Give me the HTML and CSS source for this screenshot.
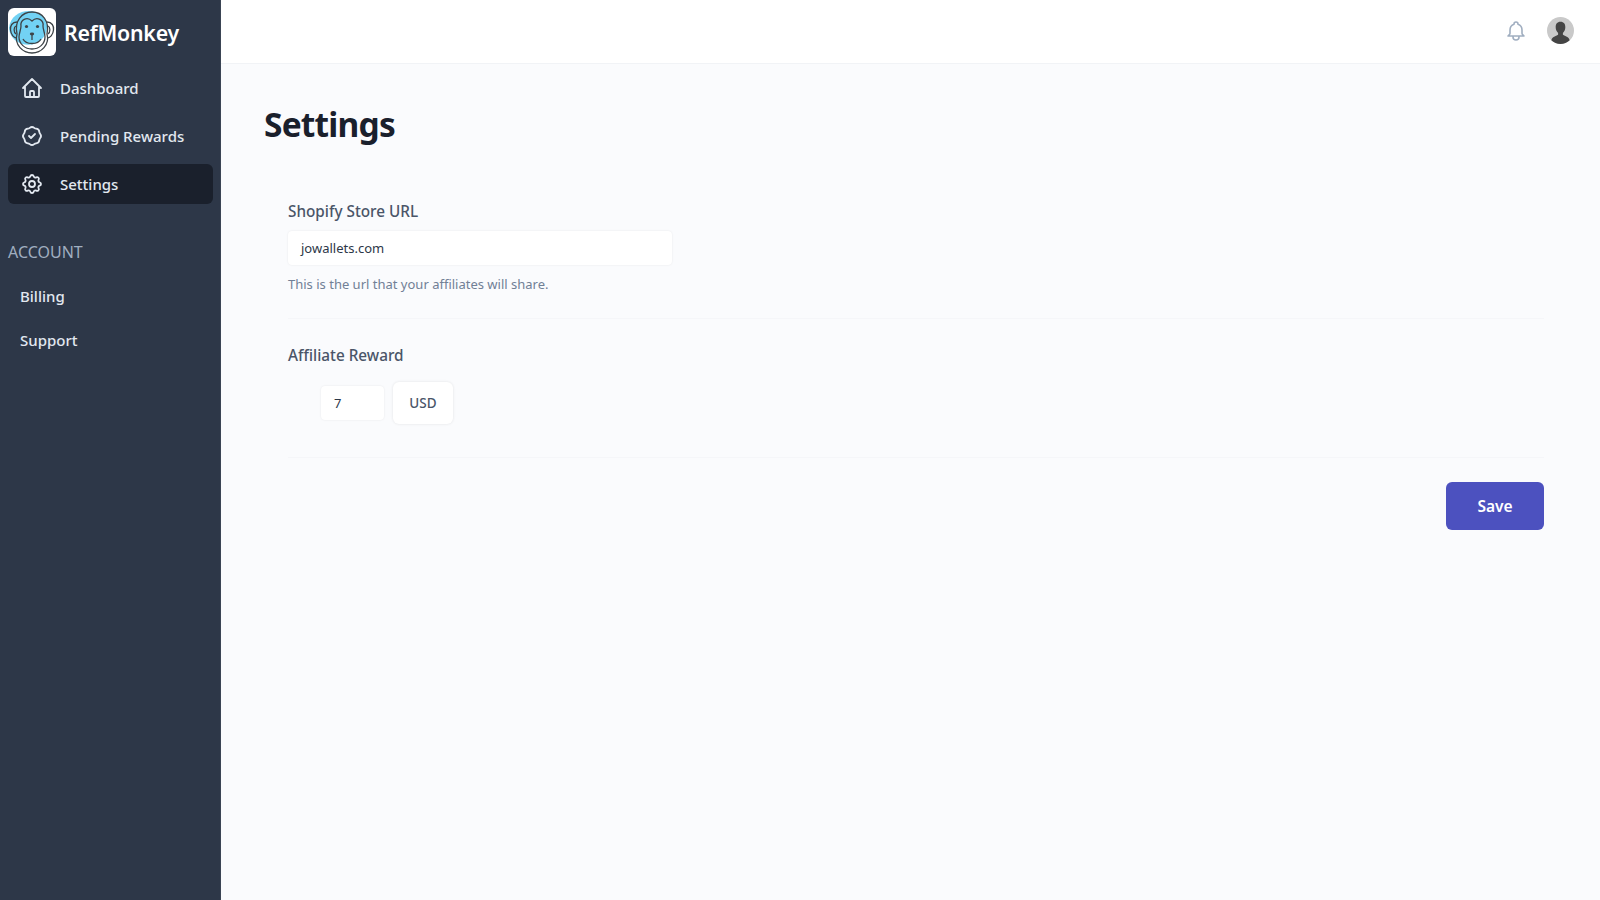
FILE: index.html
```html
<!DOCTYPE html>
<html lang="en">
<head>
  <meta charset="UTF-8">
  <meta name="viewport" content="width=device-width, initial-scale=1.0">
  <title>RefMonkey - Settings</title>
  <link rel="stylesheet" href="styles.css">
</head>
<body>

  <div class="app">
    <aside class="sidebar">
      <div class="brand">
        <div class="logo">
          <svg viewBox="0 0 48 48" width="48" height="48">
            <path d="M1 20 C2 9 11 3 21 3 C31 3 38 9 39 17 C40 26 33 34 26 36 C15 39 2 33 1 20 Z" fill="#72d2f4"/>
            <g fill="none" stroke="#3d4347" stroke-width="1.300">
              <path d="M9 14 C4 14 2 18 2.500 22 C3 27 6 30 9 30"/>
              <path d="M8 18 C5.500 19 5.500 24 8 26"/>
              <path d="M39 14 C44 14 46 18 45.500 22 C45 27 42 30 39 30"/>
              <path d="M40 18 C42.500 19 42.500 24 40 26"/>
              <path d="M9 26 C6 13 14 4 24 4 C34 4 42 13 39 26 C42 37 33 45 24 45 C15 45 6 37 9 26 Z"/>
              <path d="M24 13 C19 8 12 12 13 18 C13 22 11 25 11 29 C11 36 17 41 24 41 C31 41 37 36 37 29 C37 25 35 22 35 18 C36 12 29 8 24 13 Z"/>
              <path d="M15 31 C18 37 30 37 33 31"/>
              <path d="M24 27 V32"/>
            </g>
            <circle cx="18.500" cy="18.500" r="1.600" fill="#3d4347"/>
            <circle cx="29.500" cy="18.500" r="1.600" fill="#3d4347"/>
            <ellipse cx="24" cy="26" rx="2.200" ry="1.400" fill="#3d4347"/>
          </svg>
        </div>
        <span class="brand-name">RefMonkey</span>
      </div>

      <nav class="nav">
        <a class="nav-item">
          <svg class="nav-icon" viewBox="0 0 24 24" fill="none" stroke="currentColor" stroke-width="2" stroke-linecap="round" stroke-linejoin="round">
            <path d="M3 12l2-2m0 0l7-7 7 7M5 10v10a1 1 0 001 1h3m10-11l2 2m-2-2v10a1 1 0 01-1 1h-3m-6 0a1 1 0 001-1v-4a1 1 0 011-1h2a1 1 0 011 1v4a1 1 0 001 1m-6 0h6"/>
          </svg>
          Dashboard
        </a>
        <a class="nav-item">
          <svg class="nav-icon" viewBox="0 0 24 24" fill="none" stroke="currentColor" stroke-width="2" stroke-linecap="round" stroke-linejoin="round">
            <path d="M9 12l2 2 4-4M7.835 4.697a3.42 3.42 0 001.946-.806 3.42 3.42 0 014.438 0 3.42 3.42 0 001.946.806 3.42 3.42 0 013.138 3.138 3.42 3.42 0 00.806 1.946 3.42 3.42 0 010 4.438 3.42 3.42 0 00-.806 1.946 3.42 3.42 0 01-3.138 3.138 3.42 3.42 0 00-1.946.806 3.42 3.42 0 01-4.438 0 3.42 3.42 0 00-1.946-.806 3.42 3.42 0 01-3.138-3.138 3.42 3.42 0 00-.806-1.946 3.42 3.42 0 010-4.438 3.42 3.42 0 00.806-1.946 3.42 3.42 0 013.138-3.138z"/>
          </svg>
          Pending Rewards
        </a>
        <a class="nav-item active">
          <svg class="nav-icon" viewBox="0 0 24 24" fill="none" stroke="currentColor" stroke-width="2" stroke-linecap="round" stroke-linejoin="round">
            <path d="M10.325 4.317c.426-1.756 2.924-1.756 3.35 0a1.724 1.724 0 002.573 1.066c1.543-.94 3.31.826 2.37 2.37a1.724 1.724 0 001.065 2.572c1.756.426 1.756 2.924 0 3.35a1.724 1.724 0 00-1.066 2.573c.94 1.543-.826 3.31-2.37 2.37a1.724 1.724 0 00-2.572 1.065c-.426 1.756-2.924 1.756-3.35 0a1.724 1.724 0 00-2.573-1.066c-1.543.94-3.31-.826-2.37-2.37a1.724 1.724 0 00-1.065-2.572c-1.756-.426-1.756-2.924 0-3.35a1.724 1.724 0 001.066-2.573c-.94-1.543.826-3.31 2.37-2.37.996.608 2.296.07 2.572-1.065z"/>
            <path d="M15 12a3 3 0 11-6 0 3 3 0 016 0z"/>
          </svg>
          Settings
        </a>
      </nav>

      <div class="nav-heading">ACCOUNT</div>
      <a class="sub-item">Billing</a>
      <a class="sub-item">Support</a>
    </aside>

    <div class="content">
      <header class="topbar">
        <svg class="bell" viewBox="0 0 24 24" fill="none" stroke="currentColor" stroke-width="2" stroke-linecap="round" stroke-linejoin="round">
          <path d="M15 17h5l-1.405-1.405A2.032 2.032 0 0118 14.158V11a6.002 6.002 0 00-4-5.659V5a2 2 0 10-4 0v.341C7.67 6.165 6 8.388 6 11v3.159c0 .538-.214 1.055-.595 1.436L4 17h5m6 0v1a3 3 0 11-6 0v-1m6 0H9"/>
        </svg>
        <div class="avatar">
          <svg viewBox="0 0 28 28" width="28" height="28">
            <circle cx="14" cy="14" r="14" fill="#c9c9c9"/>
            <path d="M14 5 C10.500 5 9 7.500 9 10.500 C9 13 10 15 11.500 16.500 L11.500 18.500 C9 20 5.500 20.500 4.500 24 C7 26.500 10.500 28 14 28 C17.500 28 21 26.500 23.500 24 C22.500 20.500 19 20 16.500 18.500 L16.500 16.500 C18 15 19 13 19 10.500 C19 7.500 17.500 5 14 5 Z" fill="#444"/>
          </svg>
        </div>
      </header>

      <main class="main">
        <h1 class="page-title">Settings</h1>

        <form class="form">
          <section class="form-section">
            <label class="field-label">Shopify Store URL</label>
            <div class="text-input url-input">jowallets.com</div>
            <p class="hint">This is the url that your affiliates will share.</p>
          </section>

          <section class="form-section reward-section">
            <label class="field-label">Affiliate Reward</label>
            <div class="reward-row">
              <div class="text-input amount-input">7</div>
              <div class="currency">USD</div>
            </div>
          </section>

          <div class="form-actions">
            <button type="button" class="save-btn">Save</button>
          </div>
        </form>
      </main>
    </div>
  </div>

</body>
</html>
```

FILE: styles.css
```css
* {
  box-sizing: border-box;
}

body {
  margin: 0;
  font-family: "Noto Sans", "Open Sans", sans-serif;
  background-color: #fafbfd;
  color: #1a202c;
}

.app {
  display: flex;
  height: 900px;
  overflow: hidden;
}

/* sidebar */
.sidebar {
  width: 221px;
  flex-shrink: 0;
  padding: 8px 7px 8px 8px;
  background-color: #2d3748;
  border-right: 1px solid #3a4454;
  color: #e2e8f0;
}

.brand {
  display: flex;
  align-items: center;
  gap: 8px;
  height: 48px;
}

.logo {
  width: 48px;
  height: 48px;
  background-color: #fff;
  border-radius: 6px;
  overflow: hidden;
}

.logo svg {
  display: block;
}

.brand-name {
  font-size: 21.300px;
  font-weight: 600;
  color: #fff;
  letter-spacing: -0.2px;
}

.nav {
  display: flex;
  flex-direction: column;
  gap: 8px;
  margin-top: 12px;
}

.nav-item {
  display: flex;
  align-items: center;
  gap: 16px;
  height: 40px;
  padding: 0 12px;
  border-radius: 6px;
  font-size: 15px;
  font-weight: 500;
  color: #e2e8f0;
}

.nav-item.active {
  background-color: #1a202c;
}

.nav-icon {
  width: 24px;
  height: 24px;
  flex-shrink: 0;
  stroke-width: 1.8;
}

.nav-heading {
  margin-top: 36px;
  font-size: 16px;
  line-height: 24px;
  color: #a0aec0;
}

.sub-item {
  display: block;
  margin-top: 20px;
  padding-left: 12px;
  font-size: 15px;
  font-weight: 500;
  line-height: 24px;
  color: #e2e8f0;
}

/* top bar */
.content {
  flex: 1;
  display: flex;
  flex-direction: column;
}

.topbar {
  display: flex;
  align-items: center;
  justify-content: flex-end;
  gap: 19px;
  height: 64px;
  padding: 0 26px 2px 0;
  background-color: #fff;
  border-bottom: 1px solid #f1f3f6;
}

.bell {
  width: 24px;
  height: 24px;
  color: #a0aec0;
  stroke-width: 1.6;
}

.avatar {
  width: 27px;
  height: 27px;
}

.avatar svg {
  display: block;
  width: 100%;
  height: 100%;
}

/* main */
.main {
  flex: 1;
  padding: 35px 56px 0 43px;
}

.page-title {
  margin: 0;
  font-size: 33.500px;
  font-weight: 700;
  line-height: 50px;
  letter-spacing: -0.8px;
  color: #1a202c;
}

.form {
  padding-left: 24px;
  margin-top: 50px;
}

.form-section {
  padding-bottom: 24px;
  border-bottom: 1px solid #f5f6f9;
}

.reward-section {
  margin-top: 24px;
  padding-bottom: 33px;
}

.field-label {
  display: block;
  font-size: 15.300px;
  font-weight: 500;
  line-height: 24px;
  color: #4a5568;
}

.text-input {
  display: flex;
  align-items: center;
  height: 34px;
  padding: 0 13px;
  background-color: #fff;
  border-radius: 4px;
  box-shadow: 0 0 2px rgba(0, 0, 0, 0.09);
  font-size: 13px;
  color: #2d3748;
}

.url-input {
  width: 384px;
  margin-top: 8px;
}

.hint {
  margin: 9px 0 0;
  font-size: 13px;
  line-height: 20px;
  color: #718096;
}

.reward-row {
  display: flex;
  align-items: center;
  gap: 9px;
  margin-top: 15px;
  padding-left: 33px;
}

.amount-input {
  width: 63px;
}

.currency {
  display: flex;
  align-items: center;
  justify-content: center;
  width: 60px;
  height: 42px;
  background-color: #fff;
  border-radius: 6px;
  box-shadow: 0 0 3px rgba(0, 0, 0, 0.1);
  font-size: 13.500px;
  font-weight: 500;
  color: #4a5568;
}

.form-actions {
  display: flex;
  justify-content: flex-end;
  margin-top: 24px;
}

.save-btn {
  width: 98px;
  height: 48px;
  background-color: #4c51bf;
  border: none;
  border-radius: 6px;
  font-family: inherit;
  font-size: 15.500px;
  font-weight: 600;
  color: #fff;
  cursor: pointer;
}
```
